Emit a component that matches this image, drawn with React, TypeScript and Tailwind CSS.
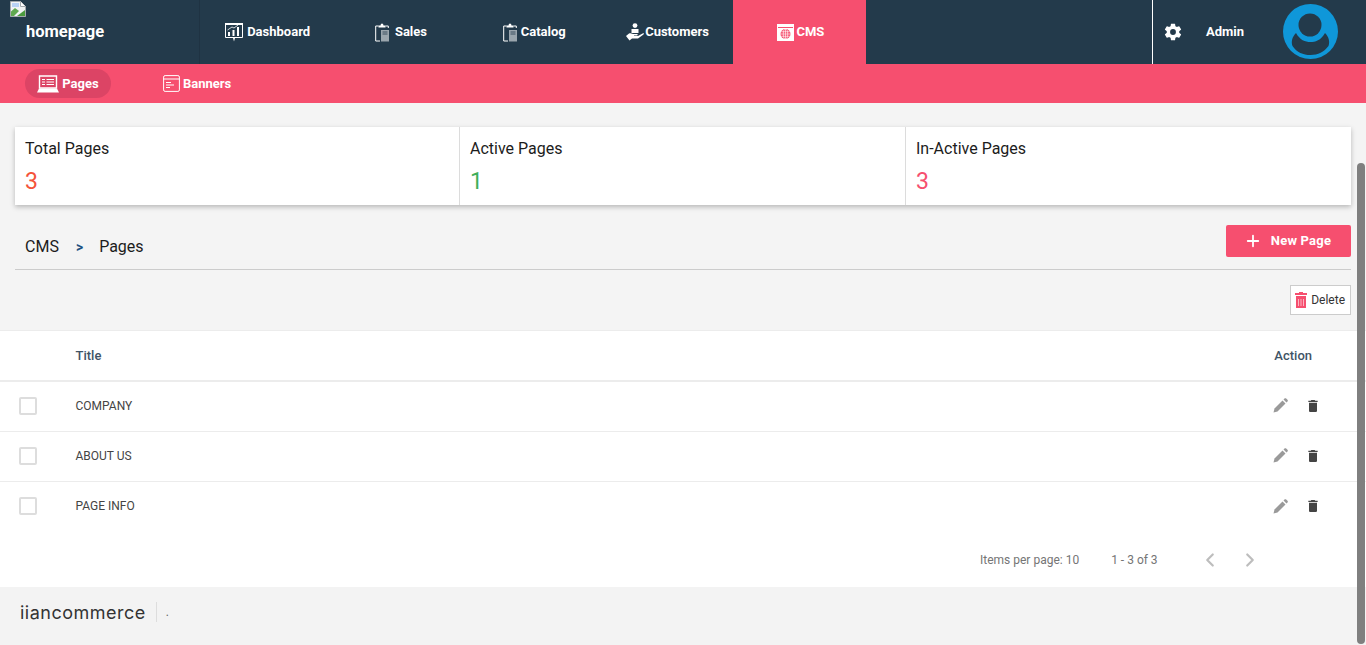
import React from 'react';
import { Plus, ChevronLeft, ChevronRight } from 'lucide-react';

const BrokenImage = () => (
  <svg width="16" height="16" viewBox="0 0 16 16" className="absolute left-[10px] top-[1px]">
    <path d="M0.5 0.5H10.5L15.5 5.5V15.5H0.5Z" fill="#f1f3f4" stroke="#a4a9ad" />
    <path d="M10.5 0.5V5.5H15.5" fill="#fff" stroke="#a4a9ad" />
    <path d="M2 2H9V6H2Z" fill="#b9d2f5" />
    <path d="M1 15V10.5L5 7L9 10L4 15Z" fill="#5fa84f" />
    <path d="M7 15L15 9V15Z" fill="#4b9a3e" />
  </svg>
);

const ChartIcon = () => (
  <svg width="18" height="19" viewBox="0 0 18 19" fill="none">
    <path d="M0.5 1H17.5V14.5H0.5Z" stroke="#fff" />
    <path d="M0 1H18" stroke="#fff" strokeWidth="2" />
    <path d="M3 13V9H5V13ZM7.5 13V7H9.5V13ZM12 13V4H14V13Z" fill="#fff" />
    <path d="M2.5 7L7 4L9 5L13 2" stroke="#fff" strokeWidth="0.8" />
    <path d="M8 15H10L9 18.5Z" fill="#fff" />
  </svg>
);

const ClipboardIcon = () => (
  <svg width="14" height="19" viewBox="0 0 14 19" fill="none">
    <path d="M3.5 3H0.7V18H5M10.5 3H13.3V5" stroke="#fff" />
    <path d="M3.5 4.5V2.5H5.5L6 0.7H8L8.5 2.5H10.5V4.5Z" fill="#fff" />
    <path d="M6 7H14V18.5H6Z" fill="#9aa5ad" />
    <path d="M7.5 9H12.5M7.5 11H12.5" stroke="#233a4b" strokeWidth="0.8" />
  </svg>
);

const CustomersIcon = () => (
  <svg width="18" height="18" viewBox="0 0 18 18" fill="#fff">
    <circle cx="9" cy="2.6" r="2.4" />
    <path d="M5.5 6H12.5V10H5.5Z" />
    <path d="M0 13L3 10.5C5 9.5 6 11 8.5 11H11C12 11 12 12.5 11 12.5H8V13H12L17.5 10C18 10.5 18 11 17.5 11.5L12 15.5H6L3.5 17.5Z" />
  </svg>
);

const CmsIcon = () => (
  <svg width="17" height="17" viewBox="0 0 17 17">
    <path d="M0 0H17V17H0Z" fill="#fff" />
    <path d="M1 3H16V4H1Z" fill="#f64f6f" />
    <circle cx="8.5" cy="10" r="5" fill="#f64f6f" />
    <g stroke="#fff" strokeWidth="0.6" fill="none">
      <ellipse cx="8.5" cy="10" rx="2.2" ry="5" />
      <path d="M8.5 5V15M3.5 10H13.5M4.2 7.7H12.8M4.2 12.3H12.8" />
    </g>
  </svg>
);

const GearIcon = () => (
  <svg width="20" height="20" viewBox="0 0 24 24" fill="#fff">
    <path d="M19.43 12.98c.04-.32.07-.64.07-.98s-.03-.66-.07-.98l2.11-1.65a.5.5 0 0 0 .12-.64l-2-3.46a.5.5 0 0 0-.61-.22l-2.49 1a7.3 7.3 0 0 0-1.69-.98l-.38-2.65A.49.49 0 0 0 14 2h-4a.49.49 0 0 0-.49.42l-.38 2.65c-.61.25-1.17.59-1.69.98l-2.49-1a.49.49 0 0 0-.61.22l-2 3.46a.49.49 0 0 0 .12.64l2.11 1.65c-.04.32-.07.65-.07.98s.03.66.07.98l-2.11 1.65a.5.5 0 0 0-.12.64l2 3.46c.12.22.39.3.61.22l2.49-1c.52.4 1.08.73 1.69.98l.38 2.65c.03.24.24.42.49.42h4c.25 0 .46-.18.49-.42l.38-2.65c.61-.25 1.17-.59 1.69-.98l2.49 1c.23.09.49 0 .61-.22l2-3.46a.5.5 0 0 0-.12-.64zM12 15.5a3.5 3.5 0 1 1 0-7 3.5 3.5 0 0 1 0 7z" />
  </svg>
);

const AvatarIcon = () => (
  <svg width="55" height="55" viewBox="0 0 55 55">
    <circle cx="27.5" cy="27.5" r="27.5" fill="#0f97d9" />
    <circle cx="27" cy="21" r="11.5" fill="#233a4b" />
    <path d="M13 29C9 33 8 38 9.5 42C14 48.5 20 51 27.5 51C35 51 41 48 45.5 42C47 38 46 33 42 29C38 36.5 32 38 27.5 38C22 38 17 36 13 29Z" fill="#233a4b" />
  </svg>
);

const LaptopIcon = () => (
  <svg width="22" height="18" viewBox="0 0 22 18" fill="none">
    <path d="M2.5 1H19.5V13H2.5Z" stroke="#fff" strokeWidth="1.4" />
    <path d="M5 4.5H8M5 7H8M5 9.5H8M9.5 4.5H17M9.5 7H17M9.5 9.5H17" stroke="#fff" />
    <path d="M2 13.5H20L22 17.5H0Z" fill="#fff" />
  </svg>
);

const BannerIcon = () => (
  <svg width="17" height="17" viewBox="0 0 17 17" fill="none" stroke="#fff">
    <rect x="0.6" y="0.6" width="15.8" height="15.8" rx="1.5" />
    <path d="M0.6 4H16.4" />
    <path d="M3 7.5H8M3 10H11M3 12.5H7" strokeWidth="1.1" />
  </svg>
);

const PencilIcon = () => (
  <svg width="15" height="15" viewBox="0 0 15 15" fill="#9a9a9a">
    <path d="M0.5 14.5L1.5 10.5L9.5 2.5L12.5 5.5L4.5 13.5Z" />
    <path d="M10.5 1.5L11.5 0.5C12 0 12.700 0 13.200 0.500L14.500 1.800C15 2.300 15 3 14.500 3.500L13.500 4.500Z" />
  </svg>
);

const TrashIcon = () => (
  <svg width="16" height="16" viewBox="0 0 24 24" fill="#444444">
    <path d="M6 19c0 1.1.9 2 2 2h8c1.1 0 2-.9 2-2V7H6v12zM19 4h-3.5l-1-1h-5l-1 1H5v2h14V4z" />
  </svg>
);

const DeleteIcon = () => (
  <svg width="12" height="16" viewBox="0 0 12 16">
    <path d="M4 0H8V1H12V3H0V1H4Z" fill="#f64f6f" />
    <path d="M1 4H11V16H1Z" fill="#f64f6f" />
    <path d="M3.5 7V14M6 7V14M8.500 7V14" stroke="#fbb4c2" strokeWidth="1" />
  </svg>
);

const navItems = [
  { label: 'Dashboard', icon: <ChartIcon />, gap: 'gap-1' },
  { label: 'Sales', icon: <ClipboardIcon />, gap: 'gap-[6px]' },
  { label: 'Catalog', icon: <ClipboardIcon />, gap: 'gap-1' },
  { label: 'Customers', icon: <CustomersIcon />, gap: 'gap-px' },
  { label: 'CMS', icon: <CmsIcon />, gap: 'gap-[2px]', active: true }
];

const stats = [
  { label: 'Total Pages', value: '3', color: 'text-[#f4533a]' },
  { label: 'Active Pages', value: '1', color: 'text-[#3fae5a]' },
  { label: 'In-Active Pages', value: '3', color: 'text-[#f64f6f]' }
];

const rows = ['COMPANY', 'ABOUT US', 'PAGE INFO'];

export default function App() {
  return (
    <div className="relative h-[645px] overflow-hidden bg-[#f4f4f4] font-['Roboto',sans-serif]">
      <header className="flex h-[64px] bg-[#233a4b] text-white">
        <div className="relative w-[200px] border-r border-[#1f3343] pl-[26px] pt-[22px] text-[16.5px] font-bold leading-[20px]">
          <BrokenImage />
          homepage
        </div>
        <nav className="flex">
          {navItems.map((item) => (
            <div
              key={item.label}
              className={`flex w-[133.3px] items-center justify-center pl-[2px] text-[13px] font-bold ${item.gap} ${item.active ? 'bg-[#f64f6f]' : ''}`}
            >
              {item.icon}
              <span>{item.label}</span>
            </div>
          ))}
        </nav>
        <div className="ml-auto flex w-[214px] items-center border-l border-white pl-[10px]">
          <GearIcon />
          <span className="ml-[23px] text-[13px] font-bold">Admin</span>
          <div className="-mt-px ml-[39px]">
            <AvatarIcon />
          </div>
        </div>
      </header>

      <div className="flex h-[39px] items-center bg-[#f64f6f] pl-[25px] text-[13px] font-bold text-white">
        <div className="flex h-[29px] w-[86px] items-center justify-center gap-[3px] rounded-full bg-[#dc4465]">
          <LaptopIcon />
          <span>Pages</span>
        </div>
        <div className="ml-[52px] flex items-center gap-[3px]">
          <BannerIcon />
          <span>Banners</span>
        </div>
      </div>

      <section className="mx-[15px] mt-[24px] grid h-[78px] w-[1336px] grid-cols-[444px_446px_1fr] bg-white shadow-[0_2px_5px_rgba(0,0,0,0.25)]">
        {stats.map((stat, i) => (
          <div key={stat.label} className={`pl-[10px] pt-[12px] ${i > 0 ? 'border-l border-[#dcdcdc]' : ''}`}>
            <div className="text-[16px] leading-[20px] text-[#1c1c1c]">{stat.label}</div>
            <div className={`mt-[9px] text-[23px] leading-[28px] ${stat.color}`}>{stat.value}</div>
          </div>
        ))}
      </section>

      <div className="mx-[15px] mt-[20px] flex h-[45px] w-[1336px] items-start justify-between border-b border-[#cccccc]">
        <div className="flex pl-[10px] pt-[12px] text-[16px] leading-[20px] text-[#1c1c1c]">
          <span>CMS</span>
          <span className="ml-[17px] text-[14px] font-bold text-[#1d4f80]">&gt;</span>
          <span className="ml-[16px]">Pages</span>
        </div>
        <button className="flex h-[32px] w-[125px] items-center justify-center gap-[9px] rounded-[2px] bg-[#f64f6f] pr-[2px] text-[13px] font-bold tracking-[0.2px] text-white">
          <Plus size={18} strokeWidth={2.4} />
          New Page
        </button>
      </div>

      <div className="mr-[15px] mt-[15px] flex justify-end">
        <button className="flex h-[30px] w-[61px] items-center justify-end gap-[4px] border border-[#cccccc] bg-white pr-[5px] text-[12px] text-[#333333]">
          <DeleteIcon />
          Delete
        </button>
      </div>

      <section className="mt-[15px] h-[257px] border-t border-[#ececec] bg-white">
        <div className="flex h-[51px] items-center border-b-2 border-[#ececec] pl-[75.5px] pr-[54px] text-[13px] font-medium text-[#3f5466]">
          <span>Title</span>
          <span className="ml-auto">Action</span>
        </div>
        {rows.map((row, i) => (
          <div
            key={row}
            className={`flex h-[50px] items-center pb-[2px] pl-[19px] pr-[45px] text-[12px] text-[#444444] ${i < rows.length - 1 ? 'border-b border-[#ececec]' : ''}`}
          >
            <span className="h-[18px] w-[18px] rounded-[2px] border-2 border-[#dddddd]" />
            <span className="ml-[38.5px]">{row}</span>
            <span className="ml-auto">
              <PencilIcon />
            </span>
            <span className="ml-[17px]">
              <TrashIcon />
            </span>
          </div>
        ))}
        <div className="flex h-[55px] items-center pl-[980px] text-[12px] text-[#757575]">
          <span>Items per page: 10</span>
          <span className="ml-[32px]">1 - 3 of 3</span>
          <ChevronLeft size={22} strokeWidth={2.4} className="ml-[41px] text-[#bdbdbd]" />
          <ChevronRight size={22} strokeWidth={2.4} className="ml-[18px] text-[#bdbdbd]" />
        </div>
      </section>

      <footer className="flex h-[58px] items-center bg-[#f3f3f3] pb-[8px] pl-[20px]">
        <span className="font-['Inter',sans-serif] text-[18px] tracking-[0.5px] text-[#333333]">iiancommerce</span>
        <span className="ml-[10px] h-[20px] border-l border-[#dddddd]" />
        <span className="ml-[9px] text-[12px] text-[#666666]">.</span>
      </footer>

      <div className="absolute bottom-[1px] right-[1px] top-[163px] w-[8px] rounded-full bg-[#7f7f7f]" />
    </div>
  );
}
